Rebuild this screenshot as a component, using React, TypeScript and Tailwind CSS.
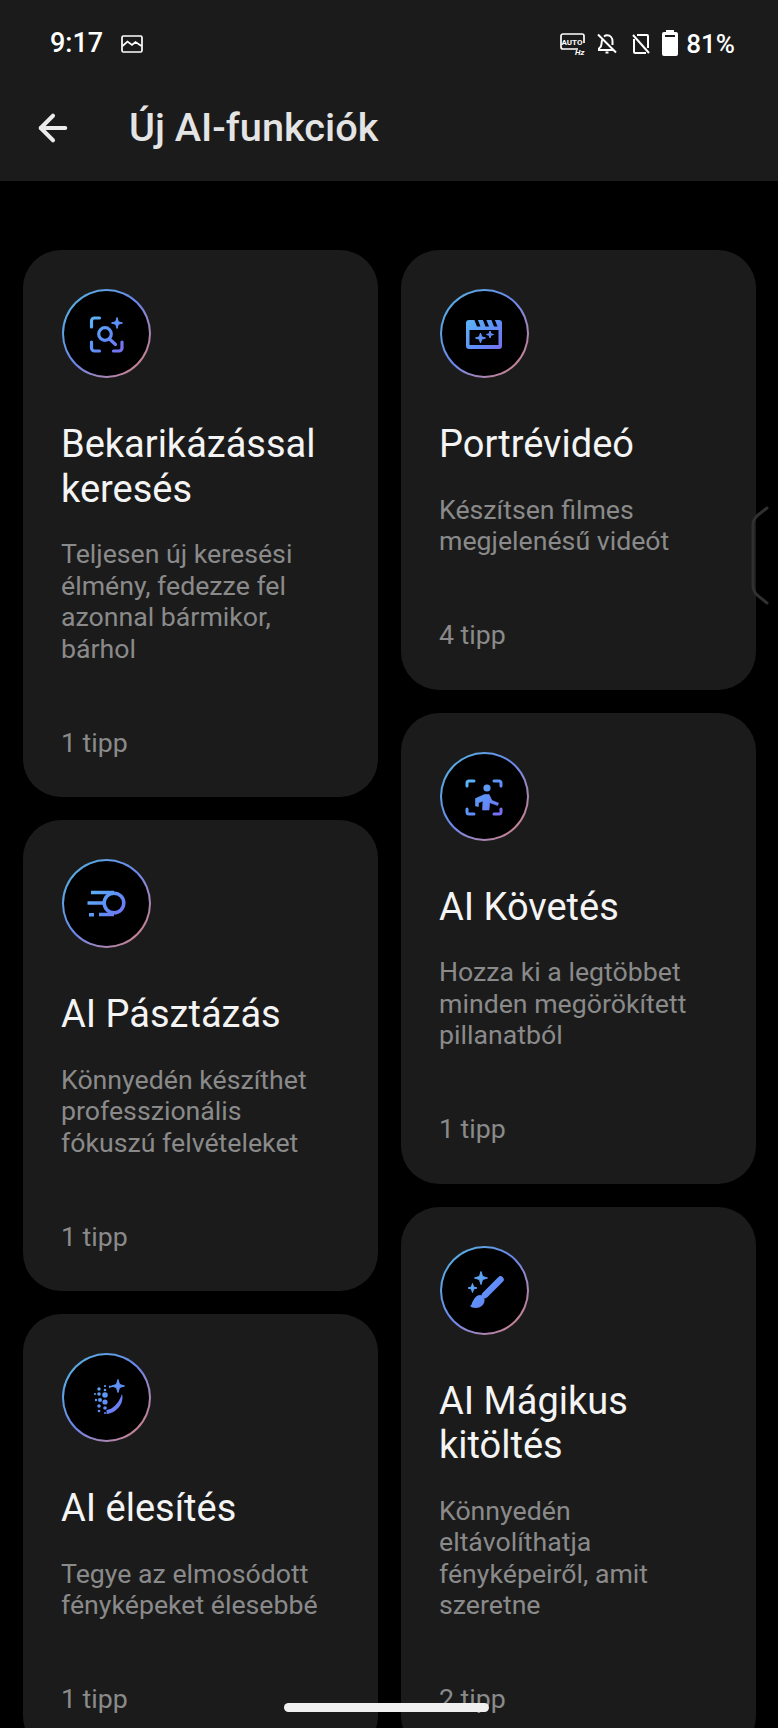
import type { ReactNode } from "react";
import { ArrowLeft } from "lucide-react";

// gradient shared by every feature glyph
const GRAD = "url(#aiGlyph)";

function Sparkle({ x, y, r }: { x: number; y: number; r: number }) {
  const k = r * 0.24;
  return (
    <path
      d={`M${x} ${y - r}L${x + k} ${y - k}L${x + r} ${y}L${x + k} ${y + k}L${x} ${y + r}L${x - k} ${y + k}L${x - r} ${y}L${x - k} ${y - k}Z`}
      fill={GRAD}
      stroke={GRAD}
      strokeWidth={1}
      strokeLinejoin="round"
    />
  );
}

const SearchGlyph = (
  <>
    <g fill="none" stroke={GRAD} strokeWidth={3.2} strokeLinecap="round">
      <path d="M29.500 38v-6a3 3 0 0 1 3-3h5" />
      <path d="M29.500 53v6a3 3 0 0 0 3 3h5" />
      <path d="M60 53v6a3 3 0 0 1-3 3h-5.500" />
      <circle cx={43} cy={45} r={6.300} />
      <path d="M47.500 50l6 5.500" />
    </g>
    <Sparkle x={55} y={34} r={5.500} />
  </>
);

const ClapperGlyph = (
  <>
    <rect x={26} y={31} width={36} height={29} rx={3} fill={GRAD} />
    <rect x={29.500} y={41} width={29} height={15} fill="black" />
    <path d="M34 30h3.500l3 7.500H37zM42.500 30H46l3 7.500h-3.500zM51 30h3.500l3 7.500H54z" fill="black" />
    <Sparkle x={40.500} y={49} r={5} />
    <Sparkle x={50} y={45.500} r={3.500} />
  </>
);

const TrackGlyph = (
  <>
    <g fill="none" stroke={GRAD} strokeWidth={3} strokeLinecap="round">
      <path d="M27 34v-3a2 2 0 0 1 2-2h5" />
      <path d="M61 34v-3a2 2 0 0 0-2-2h-5" />
      <path d="M27 57v3a2 2 0 0 0 2 2h5" />
      <path d="M61 57v3a2 2 0 0 1-2 2h-5" />
    </g>
    <circle cx={47} cy={36} r={3.600} fill={GRAD} />
    <path
      d="M35.500 54v-7.500l9-4h4.500l3 6 6.500 2.500-.8 2.500-8-2.800-.700 7.300h-6.500l.500-9-4.500 1.800v3.700z"
      fill={GRAD}
      stroke={GRAD}
      strokeWidth={0.6}
      strokeLinejoin="round"
    />
  </>
);

const ScanGlyph = (
  <>
    <g fill="none" stroke={GRAD} strokeWidth={3.500}>
      <circle cx={52} cy={44} r={9.800} />
      <path d="M29 33.500h23" />
      <path d="M25.500 44H42" />
      <path d="M37 55.500h15" />
    </g>
    <rect x={27} y={54} width={5} height={3.500} fill={GRAD} />
  </>
);

const SharpenGlyph = (
  <>
    {[
      [37, 36, 1.7], [43, 33, 1.1], [43, 37, 1.3], [33, 41, 1], [37, 41, 1.8],
      [43, 42, 2.8], [34, 47, 1.2], [38, 47, 2], [43, 49, 2.6], [37, 53, 1.8],
      [43, 55, 1.8], [37, 58, 1.3], [43, 60, 1],
    ].map(([cx, cy, r]) => (
      <circle key={`${cx}-${cy}`} cx={cx} cy={cy} r={r} fill={GRAD} />
    ))}
    <path d="M47 32.500l4.500 1-4.500 1.500z" fill={GRAD} />
    <Sparkle x={56} y={33} r={6.500} />
    <path d="M60 41c2.500 9-5 19-15.500 20v-4c6-.5 12-6 15.500-16z" fill={GRAD} />
  </>
);

const BrushGlyph = (
  <>
    <Sparkle x={41} y={32} r={6.500} />
    <Sparkle x={32.500} y={42} r={4.500} />
    <path d="M60.500 33.500L45 49" stroke={GRAD} strokeWidth={6.500} strokeLinecap="round" fill="none" />
    <path
      d="M40 49c3 0 5 3 4.500 6-.600 4-4 7-8.500 7-3 0-5-1-6-2 2-.5 1.500-3 3-5 1.500-3 4-6 7-6z"
      fill={GRAD}
    />
  </>
);

function FeatureIcon({ glyph }: { glyph: ReactNode }) {
  return (
    <div className="ml-[1px] h-[89px] w-[89px] rounded-full bg-gradient-to-br from-[#4fb6dc] via-[#6c86ec] to-[#e0776c] p-[2px]">
      <div className="relative h-full w-full rounded-full bg-black">
        <svg viewBox="0 0 89 89" className="absolute -left-[2px] -top-[2px] h-[89px] w-[89px]">
          {glyph}
        </svg>
      </div>
    </div>
  );
}

type Feature = {
  title: string[];
  body: string[];
  tips: string;
  glyph: ReactNode;
};

function FeatureCard({ title, body, tips, glyph }: Feature) {
  return (
    <div className="shrink-0 rounded-[38px] bg-[#1b1b1b] pb-[38px] pl-[38px] pr-[16px] pt-[39px]">
      <FeatureIcon glyph={glyph} />
      <h2 className="mt-[44px] text-[38px] font-normal leading-[44.5px] text-[#f4f4f4]">
        {title.map((line) => (
          <div key={line}>{line}</div>
        ))}
      </h2>
      <p className="mt-[28px] text-[26.7px] leading-[31.5px] text-[#8a8a8a]">
        {body.map((line) => (
          <span key={line} className="block">
            {line}
          </span>
        ))}
      </p>
      <div className="mt-[62.5px] text-[26.7px] leading-[31.5px] text-[#8a8a8a]">{tips}</div>
    </div>
  );
}

const leftColumn: Feature[] = [
  {
    title: ["Bekarikázással", "keresés"],
    body: ["Teljesen új keresési", "élmény, fedezze fel", "azonnal bármikor,", "bárhol"],
    tips: "1 tipp",
    glyph: SearchGlyph,
  },
  {
    title: ["AI Pásztázás"],
    body: ["Könnyedén készíthet", "professzionális", "fókuszú felvételeket"],
    tips: "1 tipp",
    glyph: ScanGlyph,
  },
  {
    title: ["AI élesítés"],
    body: ["Tegye az elmosódott", "fényképeket élesebbé"],
    tips: "1 tipp",
    glyph: SharpenGlyph,
  },
];

const rightColumn: Feature[] = [
  {
    title: ["Portrévideó"],
    body: ["Készítsen filmes", "megjelenésű videót"],
    tips: "4 tipp",
    glyph: ClapperGlyph,
  },
  {
    title: ["AI Követés"],
    body: ["Hozza ki a legtöbbet", "minden megörökített", "pillanatból"],
    tips: "1 tipp",
    glyph: TrackGlyph,
  },
  {
    title: ["AI Mágikus", "kitöltés"],
    body: ["Könnyedén", "eltávolíthatja", "fényképeiről, amit", "szeretne"],
    tips: "2 tipp",
    glyph: BrushGlyph,
  },
];

function StatusBar() {
  return (
    <div className="flex h-[87px] items-center justify-between pl-[50px] pr-[43px] text-white">
      <div className="flex items-center gap-[18px]">
        <span className="text-[27px] font-medium">9:17</span>
        <svg width="22" height="18" viewBox="0 0 22 18" fill="none" stroke="white" strokeWidth="1.700">
          <rect x="1" y="1" width="20" height="16" rx="1.500" />
          <path d="M1.500 11l5-4.500 4.500 3.500 3.500-3 6 4" />
        </svg>
      </div>
      <div className="flex items-center">
        <svg width="26" height="22" viewBox="0 0 26 22" fill="none">
          <path d="M18 16H3a2 2 0 0 1-2-2V3a2 2 0 0 1 2-2h19a2 2 0 0 1 2 2v7" stroke="white" strokeWidth="1.700" />
          <text x="12" y="11.500" textAnchor="middle" fontSize="8" fontWeight="700" fill="white" fontFamily="Roboto, sans-serif">
            AUTO
          </text>
          <text x="15" y="21.500" fontSize="8" fontWeight="700" fontStyle="italic" fill="white" fontFamily="Roboto, sans-serif">
            Hz
          </text>
        </svg>
        <svg width="20" height="22" viewBox="0 0 20 22" fill="none" stroke="white" strokeWidth="2" className="ml-[11px]">
          <path d="M5.500 6.500C4.500 8 4.500 9.500 4.500 11c0 2-1 3.500-2.500 4.500V17h14" />
          <path d="M7 3.500C8 2.700 9 2.300 10 2.300c3.500 0 5.500 2.700 5.500 6V12" />
          <path d="M8.500 19.500h3" />
          <path d="M1 1.500l18 18" />
        </svg>
        <svg width="18" height="20" viewBox="0 0 18 20" fill="none" stroke="white" strokeWidth="2" className="ml-[15px]">
          <path d="M5 1h10a1 1 0 0 1 1 1v12" />
          <path d="M2 5v13a1 1 0 0 0 1 1h11" />
          <path d="M1 1l16 18" />
        </svg>
        <div className="relative ml-[12px] h-[24px] w-[16px] rounded-[2px] bg-white">
          <div className="absolute -top-[2px] left-[4px] h-[2px] w-[8px] bg-white" />
          <div className="absolute left-[3px] top-[3px] h-[2px] w-[10px] bg-[#1b1b1b]" />
        </div>
        <span className="ml-[8px] text-[26px] font-medium leading-none">81%</span>
      </div>
    </div>
  );
}

export default function App() {
  return (
    <div className="relative h-[1728px] w-[778px] overflow-hidden bg-black font-['Roboto',sans-serif]">
      <svg width="0" height="0" className="absolute">
        <defs>
          <linearGradient id="aiGlyph" gradientUnits="userSpaceOnUse" x1="26" y1="28" x2="62" y2="62">
            <stop offset="0" stopColor="#5bb8f5" />
            <stop offset="0.55" stopColor="#5f8ff8" />
            <stop offset="1" stopColor="#7a6cf2" />
          </linearGradient>
        </defs>
      </svg>

      <header className="h-[181px] bg-[#1b1b1b]">
        <StatusBar />
        <div className="flex h-[82px] items-center pl-[32px]">
          <ArrowLeft size={42} strokeWidth={2.3} className="text-[#ececec]" />
          <h1 className="ml-[55px] text-[39.7px] font-medium text-[#e4e4e4]">Új AI-funkciók</h1>
        </div>
      </header>

      <main className="grid grid-cols-2 gap-x-[23px] pl-[23px] pr-[22px] pt-[69px]">
        {[leftColumn, rightColumn].map((column, i) => (
          <div key={i} className="flex flex-col gap-[23px]">
            {column.map((feature) => (
              <FeatureCard key={feature.title[0]} {...feature} />
            ))}
          </div>
        ))}
      </main>

      {/* side gesture handle */}
      <svg width="20" height="100" viewBox="0 0 20 100" fill="none" className="absolute left-[750px] top-[506px]">
        <path d="M17 2L8 9Q3 13 3 19V79Q3 85 7 89L17 97" stroke="#303030" strokeWidth="3" strokeLinecap="round" />
      </svg>

      {/* navigation pill */}
      <div className="absolute left-[284px] top-[1703px] h-[9px] w-[205px] rounded-full bg-[#f0f0f0]" />
    </div>
  );
}
